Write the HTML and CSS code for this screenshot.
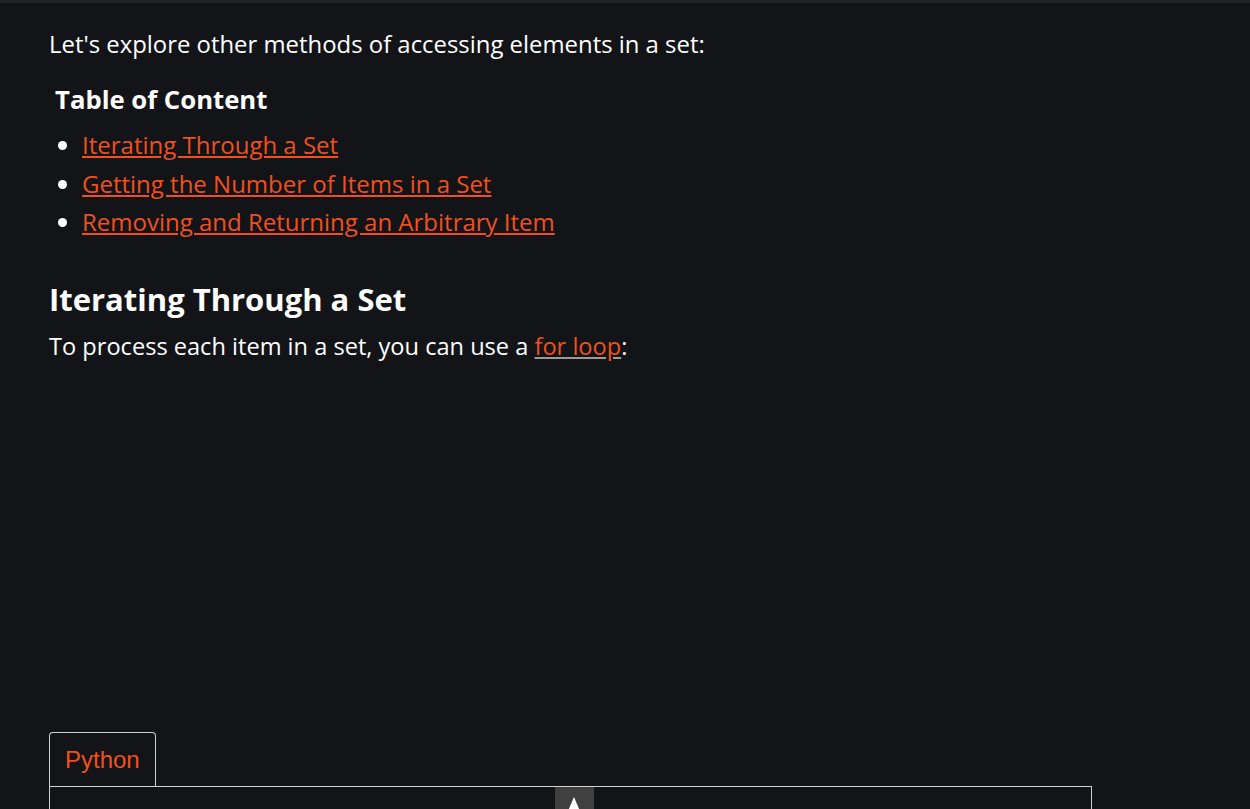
FILE: index.html
```html
<!DOCTYPE html>
<html lang="en">
<head>
<meta charset="utf-8">
<title>Sets</title>
<link rel="stylesheet" href="styles.css">
</head>
<body>
<div class="topbar"></div>
<main class="content">
  <p class="intro">Let's explore other methods of accessing elements in a set:</p>
  <div class="toc">
    <h3 class="toc-title">Table of Content</h3>
    <ul class="toc-list">
      <li><a href="#iterating">Iterating Through a Set</a></li>
      <li><a href="#number">Getting the Number of Items in a Set</a></li>
      <li><a href="#removing">Removing and Returning an Arbitrary Item</a></li>
    </ul>
  </div>
  <h2 class="section-title" id="iterating">Iterating Through a Set</h2>
  <p class="text">To process each item in a set, you can use a <a href="#" class="inline-link">for loop</a>:</p>
  <div class="ad-space"></div>
  <div class="tabs">
    <div class="tab">Python</div>
  </div>
  <div class="code-box">
    <div class="scroll-btn"><span class="arrow"></span></div>
  </div>
</main>
</body>
</html>
```
FILE: styles.css
```css
html, body {
  margin: 0;
  padding: 0;
  background: #131418;
  color: #ffffff;
  font-family: "Open Sans", "Noto Sans", sans-serif;
  overflow: hidden;
  height: 809px;
}
.topbar {
  height: 3px;
  background: #232427;
}
.content {
  padding-left: 49px;
  width: 1043px;
}
.intro {
  margin: 0;
  padding-top: 26px;
  font-size: 23.9px;
  line-height: 30px;
}
.toc {
  padding-left: 6px;
}
.toc-title {
  margin: 24px 0 0;
  font-size: 25.7px;
  font-weight: 700;
  line-height: 34px;
}
.toc-list {
  margin: 9px 0 0;
  padding-left: 27px;
  font-size: 24px;
  line-height: 38.5px;
}
a {
  color: #f0501e;
}
.toc-list li::marker {
  color: #ffffff;
}
.section-title {
  margin: 36px 0 0;
  font-size: 31px;
  font-weight: 700;
  line-height: 42px;
}
.text {
  margin: 11px 0 0;
  font-size: 23.6px;
  line-height: 30px;
}
.inline-link {
  text-decoration-color: #9a9a9a;
}
.ad-space {
  height: 371px;
}
.tabs {
  display: flex;
}
.tab {
  font-family: "Liberation Sans", Arial, sans-serif;
  font-size: 24px;
  color: #f0501e;
  border: 1px solid #d0d0d0;
  border-bottom: none;
  border-radius: 4px 4px 0 0;
  padding: 12px 15px 11px;
  line-height: 30px;
}
.code-box {
  border: 1px solid #d0d0d0;
  height: 60px;
  display: flex;
  justify-content: center;
}
.scroll-btn {
  width: 39px;
  margin-left: 7px;
  background: #404040;
  display: flex;
  justify-content: center;
  padding-top: 10px;
}
.arrow {
  width: 0;
  height: 0;
  border-left: 6px solid transparent;
  border-right: 6px solid transparent;
  border-bottom: 14px solid #ffffff;
}
```
